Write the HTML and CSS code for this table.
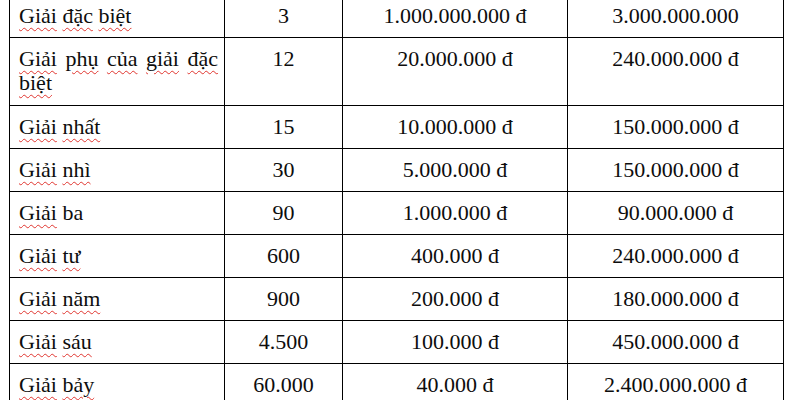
FILE: index.html
```html
<!DOCTYPE html>
<html lang="vi">
<head>
<meta charset="utf-8">
<link rel="stylesheet" href="styles.css">
</head>
<body>
<table class="prizes">
  <colgroup>
    <col class="c1"><col class="c2"><col class="c3"><col class="c4">
  </colgroup>
  <tr class="r"><td class="name"><span class="sp">Giải</span> <span class="sp">đặc</span> <span class="sp">biệt</span></td><td>3</td><td>1.000.000.000 đ</td><td>3.000.000.000</td></tr>
  <tr class="r tall"><td class="name just"><span class="sp">Giải</span> <span class="sp">phụ</span> <span class="sp">của</span> <span class="sp">giải</span> <span class="sp">đặc</span> <span class="sp">biệt</span></td><td>12</td><td>20.000.000 đ</td><td>240.000.000 đ</td></tr>
  <tr class="r"><td class="name"><span class="sp">Giải</span> <span class="sp">nhất</span></td><td>15</td><td>10.000.000 đ</td><td>150.000.000 đ</td></tr>
  <tr class="r"><td class="name"><span class="sp">Giải</span> <span class="sp">nhì</span></td><td>30</td><td>5.000.000 đ</td><td>150.000.000 đ</td></tr>
  <tr class="r"><td class="name"><span class="sp">Giải</span> ba</td><td>90</td><td>1.000.000 đ</td><td>90.000.000 đ</td></tr>
  <tr class="r"><td class="name"><span class="sp">Giải</span> <span class="sp">tư</span></td><td>600</td><td>400.000 đ</td><td>240.000.000 đ</td></tr>
  <tr class="r"><td class="name"><span class="sp">Giải</span> <span class="sp">năm</span></td><td>900</td><td>200.000 đ</td><td>180.000.000 đ</td></tr>
  <tr class="r"><td class="name"><span class="sp">Giải</span> <span class="sp">sáu</span></td><td>4.500</td><td>100.000 đ</td><td>450.000.000 đ</td></tr>
  <tr class="r"><td class="name"><span class="sp">Giải</span> <span class="sp">bảy</span></td><td>60.000</td><td>40.000 đ</td><td>2.400.000.000 đ</td></tr>
</table>
</body>
</html>
```
FILE: styles.css
```css
html, body {
  margin: 0;
  padding: 0;
  background: #ffffff;
  overflow: hidden;
}
body {
  font-family: "Liberation Serif", "Times New Roman", serif;
  font-size: 22px;
  color: #0d0d0d;
}
.prizes {
  border-collapse: collapse;
  table-layout: fixed;
  width: 774px;
  margin: -6px 0 0 9px;
}
.c1 { width: 215px; }
.c2 { width: 118px; }
.c3 { width: 225px; }
.c4 { width: 216px; }
.prizes td {
  border: 1px solid #000;
  vertical-align: top;
  text-align: center;
  padding: 9px 6px 0 6px;
  line-height: 24px;
  height: 43px;
  box-sizing: border-box;
}
.prizes tr.tall td { height: 68px; }
.prizes td.name {
  text-align: left;
  padding-left: 9px;
}
.prizes td.just {
  text-align: justify;
}
.sp {
  text-decoration: underline wavy #e0352f;
  text-decoration-thickness: 1px;
  text-underline-offset: 4px;
}
```
